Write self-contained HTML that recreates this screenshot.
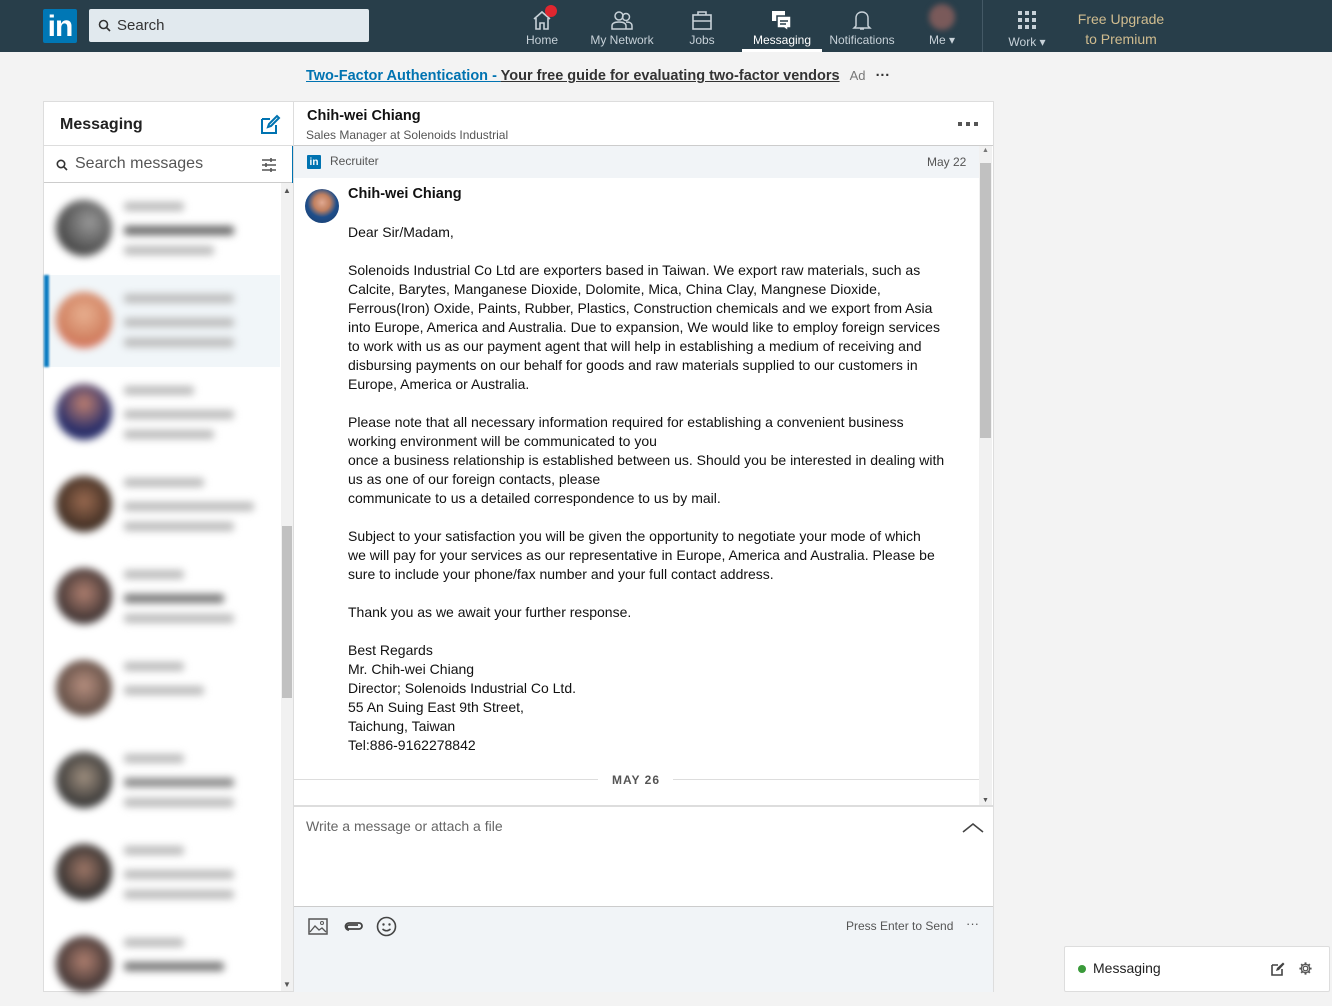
<!DOCTYPE html>
<html><head><meta charset="utf-8"><style>
*{box-sizing:border-box;margin:0;padding:0}
body{width:1332px;height:992px;overflow:hidden;background:#f3f3f3;font-family:"Liberation Sans",sans-serif;color:#000;position:relative}
.nav{position:absolute;left:0;top:0;width:1332px;height:52px;background:#283e4a}
.logo{position:absolute;left:43px;top:9px;width:34px;height:34px;background:#0077b5;border-radius:2px;color:#fff;font-weight:bold;font-size:30px;line-height:36px;text-align:center;letter-spacing:-1px}
.search{position:absolute;left:89px;top:9px;width:280px;height:33px;background:#e1e9ee;border-radius:2px;font-size:15px;color:#333;padding:8px 0 0 28px}
.ni{position:absolute;top:0;height:52px;text-align:center;color:#c7d1d8;font-size:12px}
.ni svg{position:absolute;top:9px;left:50%;margin-left:-11px}
.ni span{position:absolute;top:33px;left:0;right:0;white-space:nowrap}
.panel{position:absolute;background:#fff;border:1px solid #ddd}
.li{position:absolute;left:56px;width:220px;height:80px;filter:blur(4px)}
.av{position:absolute;left:0;top:10px;width:56px;height:56px;border-radius:50%}
.bar{position:absolute;height:9px;background:#bbb;border-radius:3px}
.msg{position:absolute;left:348px;top:223px;font-size:14px;line-height:19px;color:#111}
.msg p{margin-bottom:19px}
</style></head><body>
<div class="nav">
 <div class="logo">in</div>
 <div class="search"><svg style="position:absolute;left:9px;top:10px" width="13" height="13" viewBox="0 0 13 13"><circle cx="5.5" cy="5.5" r="4" fill="none" stroke="#333" stroke-width="1.6"/><path d="M8.5 8.5L12 12" stroke="#333" stroke-width="1.6"/></svg>Search</div>
 <div class="ni" style="left:512px;width:60px"><svg width="22" height="22" viewBox="0 0 22 22"><path d="M3 10L11 3L19 10M5 9V20H9V14H13V20H17V9" fill="none" stroke="#c7d1d8" stroke-width="1.6"/></svg><div style="position:absolute;left:33px;top:5px;width:12px;height:12px;border-radius:50%;background:#e0262f"></div><span>Home</span></div>
 <div class="ni" style="left:582px;width:80px"><svg width="22" height="22" viewBox="0 0 22 22"><circle cx="8" cy="7" r="4" fill="none" stroke="#c7d1d8" stroke-width="1.5"/><circle cx="15" cy="8" r="3.5" fill="none" stroke="#c7d1d8" stroke-width="1.5"/><path d="M1 20V17C1 14 4 13 8 13S15 14 15 17V20ZM15 13C19 13 21 14 21 17V20H15" fill="none" stroke="#c7d1d8" stroke-width="1.5"/></svg><span>My Network</span></div>
 <div class="ni" style="left:677px;width:50px"><svg width="22" height="22" viewBox="0 0 22 22"><rect x="2" y="6" width="18" height="14" fill="none" stroke="#c7d1d8" stroke-width="1.6"/><path d="M7 6V3H15V6M2 12H20" fill="none" stroke="#c7d1d8" stroke-width="1.6"/></svg><span>Jobs</span></div>
 <div class="ni" style="left:742px;width:80px;color:#fff;border-bottom:3px solid #fff"><svg width="22" height="22" viewBox="0 0 22 22"><path d="M1 2H14V12H1Z" fill="#fff"/><path d="M6 7H20V19H17V22L13 19H6Z" fill="#fff" stroke="#283e4a" stroke-width="1.5"/><path d="M9 12H17M9 15H15" stroke="#283e4a" stroke-width="1.5"/></svg><span>Messaging</span></div>
 <div class="ni" style="left:822px;width:80px"><svg width="22" height="22" viewBox="0 0 22 22"><path d="M5 17V9C5 5 8 3 11 3S17 5 17 9V17L19 19H3ZM9 20H13" fill="none" stroke="#c7d1d8" stroke-width="1.5"/></svg><span>Notifications</span></div>
 <div class="ni" style="left:917px;width:50px"><div style="position:absolute;left:12px;top:4px;width:26px;height:26px;border-radius:50%;background:#7a5a5a;filter:blur(3px)"></div><span>Me ▾</span></div>
 <div style="position:absolute;left:982px;top:0;width:1px;height:52px;background:#445966"></div>
 <div class="ni" style="left:1002px;width:50px"><svg width="22" height="22" viewBox="0 0 22 22" fill="#c7d1d8"><rect x="2" y="2" width="4" height="4"/><rect x="9" y="2" width="4" height="4"/><rect x="16" y="2" width="4" height="4"/><rect x="2" y="9" width="4" height="4"/><rect x="9" y="9" width="4" height="4"/><rect x="16" y="9" width="4" height="4"/><rect x="2" y="16" width="4" height="4"/><rect x="9" y="16" width="4" height="4"/><rect x="16" y="16" width="4" height="4"/></svg><span style="top:35px">Work ▾</span></div>
 <div style="position:absolute;left:1070px;top:9px;width:102px;text-align:center;color:#d0bc8f;font-size:14px;line-height:20px">Free Upgrade<br>to Premium</div>
</div>
<div style="position:absolute;left:306px;top:68px;font-size:14.5px;font-weight:bold;white-space:nowrap"><span style="color:#0073b1;text-decoration:underline">Two-Factor Authentication - </span><span style="color:#333;text-decoration:underline">Your free guide for evaluating two-factor vendors</span> <span style="font-weight:normal;color:#777;font-size:13px;margin-left:6px">Ad</span> <span style="color:#333;margin-left:6px">···</span></div>

<!-- left panel -->
<div class="panel" style="left:43px;top:101px;width:251px;height:891px">
 <div style="position:absolute;left:16px;top:14px;font-size:16px;font-weight:bold;color:#222">Messaging</div>
 <svg style="position:absolute;left:215px;top:12px" width="22" height="22" viewBox="0 0 22 22"><path d="M3 5H11M3 5V19H17V11" fill="none" stroke="#0073b1" stroke-width="2"/><path d="M9 13L10 10L18 2L20 4L12 12Z" fill="none" stroke="#0073b1" stroke-width="2"/></svg>
 <div style="position:absolute;left:0;top:43px;width:249px;height:1px;background:#ddd"></div>
 <svg style="position:absolute;left:12px;top:57px" width="12" height="12" viewBox="0 0 12 12"><circle cx="5" cy="5" r="3.7" fill="none" stroke="#333" stroke-width="1.6"/><path d="M7.7 7.7L11 11" stroke="#333" stroke-width="1.6"/></svg>
 <div style="position:absolute;left:31px;top:53px;font-size:16px;color:#555">Search messages</div>
 <svg style="position:absolute;left:217px;top:55px" width="16" height="16" viewBox="0 0 16 16" stroke="#555" stroke-width="1.6"><path d="M1 3H15M1 8H15M1 13H15"/><path d="M10 1V5M5 6V10M10 11V15"/></svg>
 <div style="position:absolute;left:0;top:80px;width:249px;height:1px;background:#ccc"></div>
 <div style="position:absolute;left:248px;top:44px;width:2px;height:37px;background:#0073b1"></div>
 <div style="position:absolute;left:237px;top:81px;width:12px;height:808px;background:#f1f1f1"><div style="position:absolute;left:1px;top:343px;width:10px;height:172px;background:#c1c1c1"></div><div style="position:absolute;left:2px;top:3px;font-size:8px;color:#555">▲</div><div style="position:absolute;left:2px;bottom:2px;font-size:8px;color:#555">▼</div></div>
 <div style="position:absolute;left:0;top:173px;width:236px;height:92px;background:#f1f6f9"></div>
 <div style="position:absolute;left:0;top:173px;width:5px;height:92px;background:#0a7bc0;filter:blur(1px)"></div>
</div>
<div class="li" style="top:190px"><div class="av" style="background:radial-gradient(circle at 60% 40%,#999,#222)"></div><div class="bar" style="left:68px;top:12px;width:60px"></div><div class="bar" style="left:68px;top:36px;width:110px;background:#666"></div><div class="bar" style="left:68px;top:56px;width:90px"></div></div>
<div class="li" style="top:282px"><div class="av" style="background:radial-gradient(circle at 50% 40%,#e8b090,#d08060 60%,#e05050)"></div><div class="bar" style="left:68px;top:12px;width:110px"></div><div class="bar" style="left:68px;top:36px;width:110px"></div><div class="bar" style="left:68px;top:56px;width:110px"></div></div>
<div class="li" style="top:374px"><div class="av" style="background:radial-gradient(circle at 50% 35%,#c08070,#2a2f6a 60%)"></div><div class="bar" style="left:68px;top:12px;width:70px"></div><div class="bar" style="left:68px;top:36px;width:110px"></div><div class="bar" style="left:68px;top:56px;width:90px"></div></div>
<div class="li" style="top:466px"><div class="av" style="background:radial-gradient(circle at 50% 45%,#9a6a50,#3a2a20 70%)"></div><div class="bar" style="left:68px;top:12px;width:80px"></div><div class="bar" style="left:68px;top:36px;width:130px"></div><div class="bar" style="left:68px;top:56px;width:110px"></div></div>
<div class="li" style="top:558px"><div class="av" style="background:radial-gradient(circle at 50% 45%,#b08070,#3a3030 70%)"></div><div class="bar" style="left:68px;top:12px;width:60px"></div><div class="bar" style="left:68px;top:36px;width:100px;background:#777"></div><div class="bar" style="left:68px;top:56px;width:110px"></div></div>
<div class="li" style="top:650px"><div class="av" style="background:radial-gradient(circle at 50% 45%,#b89080,#5a4840 70%)"></div><div class="bar" style="left:68px;top:12px;width:60px"></div><div class="bar" style="left:68px;top:36px;width:80px"></div></div>
<div class="li" style="top:742px"><div class="av" style="background:radial-gradient(circle at 50% 45%,#a09080,#333 70%)"></div><div class="bar" style="left:68px;top:12px;width:60px"></div><div class="bar" style="left:68px;top:36px;width:110px;background:#888"></div><div class="bar" style="left:68px;top:56px;width:110px"></div></div>
<div class="li" style="top:834px"><div class="av" style="background:radial-gradient(circle at 50% 45%,#a07868,#2a2a2a 70%)"></div><div class="bar" style="left:68px;top:12px;width:60px"></div><div class="bar" style="left:68px;top:36px;width:110px"></div><div class="bar" style="left:68px;top:56px;width:110px"></div></div>
<div class="li" style="top:926px"><div class="av" style="background:radial-gradient(circle at 50% 45%,#b08070,#3a3030 70%)"></div><div class="bar" style="left:68px;top:12px;width:60px"></div><div class="bar" style="left:68px;top:36px;width:100px;background:#777"></div></div>

<!-- right panel -->
<div class="panel" style="left:293px;top:101px;width:701px;height:891px">
 <div style="position:absolute;left:13px;top:6px;font-size:14.5px;font-weight:bold;color:#111">Chih-wei Chiang</div>
 <div style="position:absolute;left:12px;top:26px;font-size:12px;color:#555">Sales Manager at Solenoids Industrial</div>
 <div style="position:absolute;left:664px;top:20px;width:20px;height:4px;background:linear-gradient(90deg,#555 4px,transparent 4px,transparent 8px,#555 8px,#555 12px,transparent 12px,transparent 16px,#555 16px)"></div>
 <div style="position:absolute;left:0;top:43px;width:699px;height:1px;background:#ccc"></div>
 <div style="position:absolute;left:0;top:44px;width:685px;height:32px;background:#f1f4f7"></div>
 <div style="position:absolute;left:13px;top:53px;width:14px;height:14px;background:#0073b1;color:#fff;font-size:10px;font-weight:bold;line-height:15px;text-align:center;border-radius:1px">in</div>
 <div style="position:absolute;left:36px;top:52px;font-size:12px;color:#555">Recruiter</div>
 <div style="position:absolute;left:633px;top:53px;font-size:12px;color:#555">May 22</div>
 <div style="position:absolute;left:685px;top:44px;width:13px;height:660px;background:#f1f1f1"><div style="position:absolute;left:1px;top:17px;width:11px;height:275px;background:#c1c1c1"></div><div style="position:absolute;left:3px;top:1px;font-size:7px;color:#777">▲</div><div style="position:absolute;left:3px;bottom:2px;font-size:7px;color:#555">▼</div></div>
 <div style="position:absolute;left:0;top:677px;width:304px;height:1px;background:#ddd"></div>
 <div style="position:absolute;left:379px;top:677px;width:306px;height:1px;background:#ddd"></div>
 <div style="position:absolute;left:318px;top:671px;font-size:12px;font-weight:bold;color:#555;letter-spacing:1px">MAY 26</div>
 <div style="position:absolute;left:0;top:703px;width:699px;height:2px;background:#ddd"></div>
 <div style="position:absolute;left:12px;top:716px;font-size:14px;color:#666">Write a message or attach a file</div>
 <svg style="position:absolute;left:668px;top:720px" width="22" height="12" viewBox="0 0 22 12"><path d="M1 10L11 2L21 10" fill="none" stroke="#444" stroke-width="1.6"/></svg>
 <div style="position:absolute;left:0;top:804px;width:699px;height:86px;background:#f1f4f7;border-top:1px solid #ccc"></div>
 <svg style="position:absolute;left:14px;top:816px" width="20" height="18" viewBox="0 0 20 18"><rect x="1" y="1" width="18" height="15" fill="none" stroke="#555" stroke-width="1.5"/><path d="M2 14L7 8L11 12L14 10L18 14" fill="none" stroke="#555" stroke-width="1.3"/><circle cx="14" cy="5" r="1.5" fill="none" stroke="#555"/></svg>
 <svg style="position:absolute;left:49px;top:818px" width="22" height="12" viewBox="0 0 22 12"><path d="M8 3H16A3 3 0 0 1 16 9H6A2 2 0 0 1 6 5H15" fill="none" stroke="#444" stroke-width="1.8"/><path d="M8 3H6A3 3 0 0 0 6 10" fill="none" stroke="#444" stroke-width="1.8"/></svg>
 <svg style="position:absolute;left:82px;top:814px" width="21" height="21" viewBox="0 0 21 21"><circle cx="10.5" cy="10.5" r="9" fill="none" stroke="#444" stroke-width="1.6"/><circle cx="7.5" cy="8.5" r="1.2" fill="#444"/><circle cx="13.5" cy="8.5" r="1.2" fill="#444"/><path d="M6.5 13Q10.5 16.5 14.5 13" fill="none" stroke="#444" stroke-width="1.5"/></svg>
 <div style="position:absolute;left:552px;top:817px;font-size:12px;color:#555">Press Enter to Send</div>
 <div style="position:absolute;left:672px;top:814px;font-size:13px;color:#555">···</div>
</div>
<div style="position:absolute;left:305px;top:189px;width:34px;height:34px;border-radius:50%;background:radial-gradient(circle at 50% 40%,#e0a890 0,#c08060 30%,#1f4e8a 55%,#163a6a)"></div>
<div style="position:absolute;left:348px;top:186px;font-size:14.5px;font-weight:bold;color:#111">Chih-wei Chiang</div>
<div class="msg">
<p>Dear Sir/Madam,</p>
<p>Solenoids Industrial Co Ltd are exporters based in Taiwan. We export raw materials, such as<br>Calcite, Barytes, Manganese Dioxide, Dolomite, Mica, China Clay, Mangnese Dioxide,<br>Ferrous(Iron) Oxide, Paints, Rubber, Plastics, Construction chemicals and we export from Asia<br>into Europe, America and Australia. Due to expansion, We would like to employ foreign services<br>to work with us as our payment agent that will help in establishing a medium of receiving and<br>disbursing payments on our behalf for goods and raw materials supplied to our customers in<br>Europe, America or Australia.</p>
<p>Please note that all necessary information required for establishing a convenient business<br>working environment will be communicated to you<br>once a business relationship is established between us. Should you be interested in dealing with<br>us as one of our foreign contacts, please<br>communicate to us a detailed correspondence to us by mail.</p>
<p>Subject to your satisfaction you will be given the opportunity to negotiate your mode of which<br>we will pay for your services as our representative in Europe, America and Australia. Please be<br>sure to include your phone/fax number and your full contact address.</p>
<p>Thank you as we await your further response.</p>
<p>Best Regards<br>Mr. Chih-wei Chiang<br>Director; Solenoids Industrial Co Ltd.<br>55 An Suing East 9th Street,<br>Taichung, Taiwan<br>Tel:886-9162278842</p>
</div>

<div style="position:absolute;left:1064px;top:946px;width:266px;height:46px;background:#fff;border:1px solid #ddd;border-radius:2px">
 <div style="position:absolute;left:13px;top:18px;width:8px;height:8px;border-radius:50%;background:#3a9a3a"></div>
 <div style="position:absolute;left:28px;top:13px;font-size:14px;color:#222">Messaging</div>
 <svg style="position:absolute;left:206px;top:15px" width="14" height="14" viewBox="0 0 14 14"><path d="M1 3H7M1 3V13H11V7" fill="none" stroke="#444" stroke-width="1.6"/><path d="M5 9L6 6L12 0.5L13.5 2L8 8Z" fill="#444"/></svg>
 <svg style="position:absolute;left:233px;top:14px" width="15" height="15" viewBox="0 0 16 16"><circle cx="8" cy="8" r="2.5" fill="none" stroke="#555" stroke-width="1.5"/><path d="M8 1.5V4M8 12V14.5M1.5 8H4M12 8H14.5M3.4 3.4L5.2 5.2M10.8 10.8L12.6 12.6M3.4 12.6L5.2 10.8M10.8 5.2L12.6 3.4" stroke="#555" stroke-width="2"/><circle cx="8" cy="8" r="4.5" fill="none" stroke="#555" stroke-width="1.3"/></svg>
</div>
</body></html>
